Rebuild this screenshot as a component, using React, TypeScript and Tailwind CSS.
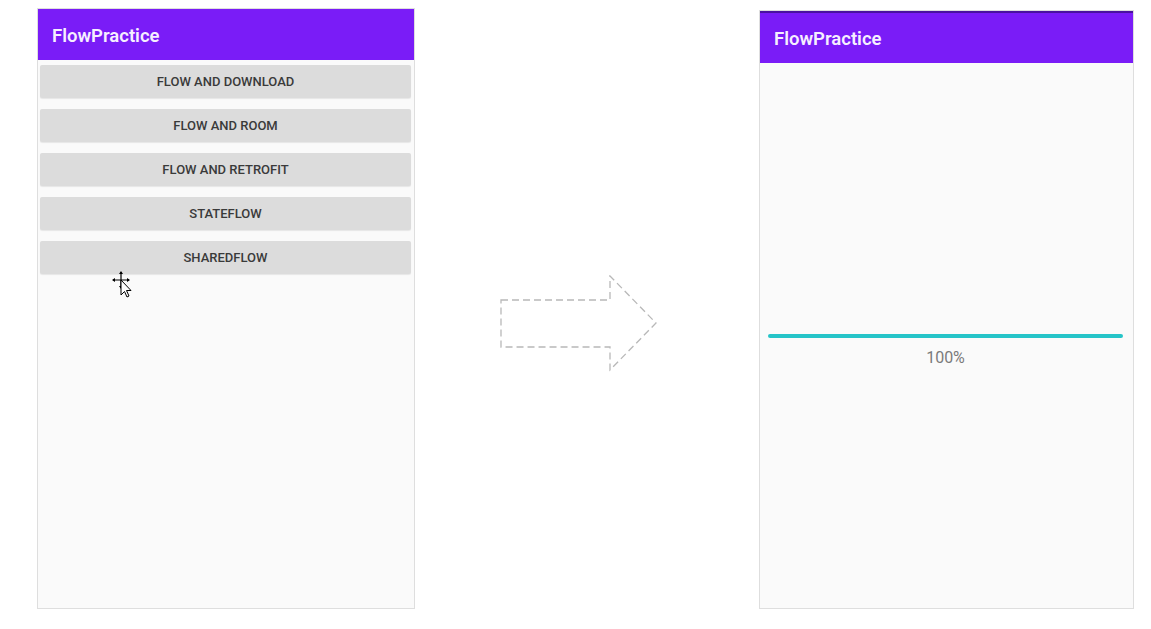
import React from "react";

const BUTTONS = [
  "FLOW AND DOWNLOAD",
  "FLOW AND ROOM",
  "FLOW AND RETROFIT",
  "STATEFLOW",
  "SHAREDFLOW",
];

function AppBar({ className = "" }: { className?: string }) {
  return (
    <div className={`flex items-center bg-[#7a1cf7] px-[14px] pt-[4px] ${className}`}>
      <span className="text-[18.5px] font-semibold text-[#f6efff]">
        FlowPractice
      </span>
    </div>
  );
}

function DashedArrow() {
  return (
    <svg width="160" height="98" viewBox="0 0 160 98" fill="none">
      <path
        d="M1 25 H110 V1 L156 48 L110 95 V72 H1 Z"
        stroke="#b8b8b8"
        strokeWidth="1.3"
        strokeDasharray="7 4"
      />
    </svg>
  );
}

function MoveCursor() {
  return (
    <svg width="22" height="30" viewBox="0 0 22 30">
      {/* move cross */}
      <path d="M9 1 L9 17 M1 9 L17 9" stroke="#000" strokeWidth="1.2" />
      <path d="M9 0 L7 3 H11 Z M9 18 L7 15 H11 Z M0 9 L3 7 V11 Z M18 9 L15 7 V11 Z" fill="#000" />
      {/* pointer */}
      <path
        d="M9 9 V24 L12.5 20.5 L15 26 L17 25 L14.5 19.5 H19 Z"
        fill="#fff"
        stroke="#000"
        strokeWidth="1"
        strokeLinejoin="round"
      />
    </svg>
  );
}

export default function App() {
  return (
    <div
      className="relative flex h-[629px] w-[1151px] overflow-hidden bg-white"
      style={{ fontFamily: "Roboto, 'Noto Sans', sans-serif" }}
    >
      {/* Left phone */}
      <div className="ml-[37px] mt-[8px] flex h-[601px] w-[378px] flex-col border border-[#dedede] bg-[#fafafa]">
        <AppBar className="h-[51px]" />
        <div className="flex flex-col gap-[11px] pl-[2px] pr-[3px] pt-[5px]">
          {BUTTONS.map((label) => (
            <div
              key={label}
              className="flex h-[33px] items-center justify-center rounded-[2px] bg-[#dcdcdc] pt-[1px] text-[13px] font-medium text-[#3a3a3a] shadow-[0_1px_1px_rgba(0,0,0,0.08)]"
            >
              {label}
            </div>
          ))}
        </div>
        <div className="ml-[74px] mt-[-3px]">
          <MoveCursor />
        </div>
      </div>

      {/* Middle arrow */}
      <div className="flex w-[344px] pl-[85px] pt-[275px]">
        <div>
          <DashedArrow />
        </div>
      </div>

      {/* Right phone */}
      <div className="mt-[10px] flex h-[599px] w-[375px] flex-col border border-[#dedede] bg-[#fafafa]">
        <AppBar className="h-[52px] border-t-2 border-[#4a12a0]" />
        <div className="flex flex-col items-center pl-[8px] pr-[10px] pt-[271px]">
          <div className="h-[4px] w-full rounded-full bg-[#25c4c8]" />
          <span className="mt-[8px] text-[16px] text-[#7a7a7a]">100%</span>
        </div>
      </div>
    </div>
  );
}
